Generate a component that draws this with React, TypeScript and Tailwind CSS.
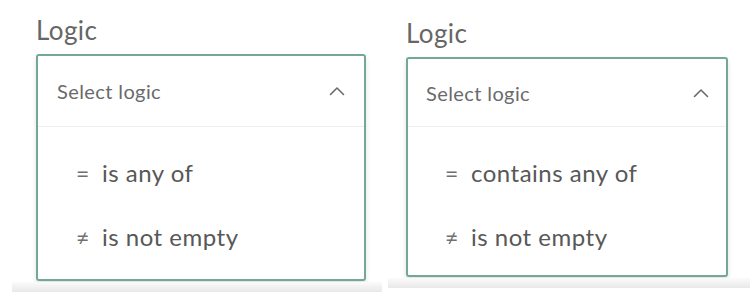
import React from "react";

type PanelProps = {
  first: string;
  wrap: string;
  label: string;
  box: string;
  header: string;
  band: string;
};

function Chevron() {
  return (
    <svg width="16" height="10" viewBox="0 0 16 10" fill="none">
      <polyline
        points="1.5,8.5 8,2 14.5,8.5"
        stroke="#6b6b6b"
        strokeWidth="1.6"
        strokeLinecap="round"
        strokeLinejoin="round"
      />
    </svg>
  );
}

function LogicPanel({ first, wrap, label, box, header, band }: PanelProps) {
  return (
    <div className={wrap}>
      <div className={label}>Logic</div>
      <div className={box}>
        <div className={header}>
          <span className="text-[20px] tracking-[0.4px] text-[#6a6a6a]">Select logic</span>
          <Chevron />
        </div>
        <div className="h-px bg-[#ededed]" />
        <div className="flex flex-col pt-[30px]">
          <div className="flex h-[32px] items-center">
            <span className="w-[26px] text-[23px] text-[#707070]">=</span>
            <span className="text-[24px] tracking-[0.5px] text-[#585858]">{first}</span>
          </div>
          <div className="mt-[32px] flex h-[32px] items-center">
            <span className="w-[26px] text-[23px] text-[#707070]">≠</span>
            <span className="text-[24px] tracking-[0.5px] text-[#585858]">is not empty</span>
          </div>
        </div>
      </div>
      <div className={band} />
    </div>
  );
}

export default function App() {
  return (
    <div className="flex h-[302px] w-[750px] bg-white font-['Lato','Liberation_Sans',sans-serif]">
      <LogicPanel
        first="is any of"
        wrap="ml-[12px] flex w-[370px] flex-col"
        label="pl-[24px] pt-[15px] text-[26px] leading-[31px] tracking-[0.4px] text-[#666666]"
        box="ml-[24px] mt-[8px] flex h-[227px] w-[330px] flex-col rounded-[3px] border-2 border-[#72a993] bg-white pl-[38px] shadow-[0_3px_5px_rgba(0,0,0,0.12)] [&>div:first-child]:-ml-[38px] [&>div:nth-child(2)]:-ml-[38px]"
        header="flex h-[70px] items-center justify-between pl-[19px] pr-[19px]"
        band="mt-[1px] h-[10px] bg-gradient-to-b from-[#fbfbfb] to-[#e8e8e8]"
      />
      <LogicPanel
        first="contains any of"
        wrap="ml-[6px] flex w-[362px] flex-col"
        label="pl-[18px] pt-[18px] text-[26px] leading-[31px] tracking-[0.4px] text-[#666666]"
        box="ml-[18px] mt-[8px] flex h-[220px] w-[322px] flex-col rounded-[3px] border-2 border-[#72a993] bg-white pl-[37px] shadow-[0_3px_5px_rgba(0,0,0,0.12)] [&>div:first-child]:-ml-[37px] [&>div:nth-child(2)]:-ml-[37px]"
        header="flex h-[67px] items-center justify-between pl-[18px] pr-[17px]"
        band="mt-[1px] h-[10px] bg-gradient-to-b from-[#fbfbfb] to-[#e8e8e8]"
      />
    </div>
  );
}
